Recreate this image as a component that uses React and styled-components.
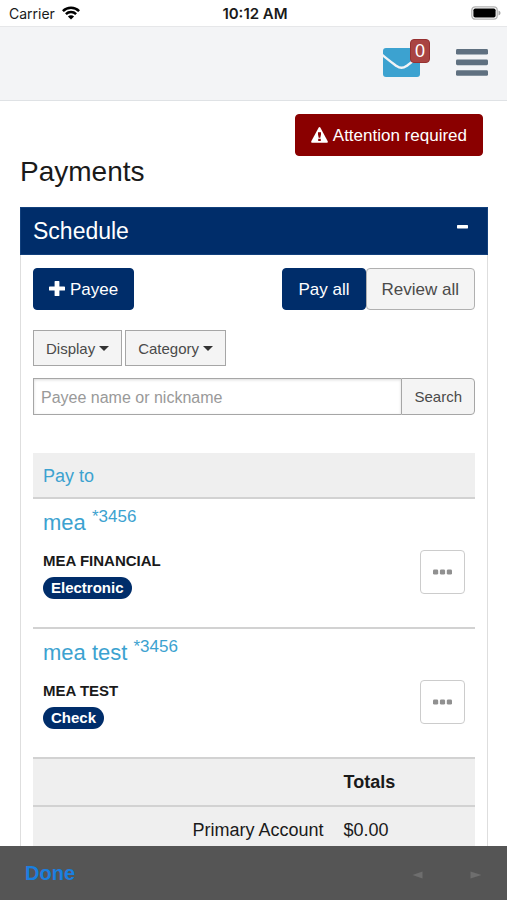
import { useState } from 'react';
import styled, { createGlobalStyle, css } from 'styled-components';

const NAVY = '#002d6a';
const SKY = '#3ca2d0';

const PAYEES = [
  { id: 1, nickname: 'mea', account: '*3456', name: 'MEA FINANCIAL', type: 'Electronic' },
  { id: 2, nickname: 'mea test', account: '*3456', name: 'MEA TEST', type: 'Check' },
];

const WifiIcon = () => (
  <svg width="18" height="14" viewBox="0 0 18 14" aria-hidden="true">
    <g fill="none" stroke="#000" strokeWidth="2.5">
      <path d="M0.9 5.1C5.4 0.6 12.6 0.6 17.1 5.1" />
      <path d="M3.9 8.1C6.7 5.3 11.3 5.3 14.1 8.1" />
    </g>
    <path d="M9 13.6L5.9 10.4C7.6 8.7 10.4 8.7 12.1 10.4Z" />
  </svg>
);

const BatteryIcon = () => (
  <svg width="30" height="14" viewBox="0 0 30 14" aria-hidden="true">
    <rect x="0.8" y="0.8" width="25.4" height="12.4" rx="3.4" fill="#fff" stroke="#b3b3b3" strokeWidth="1.3" />
    <rect x="2.4" y="2.4" width="22.2" height="9.2" rx="1.8" />
    <path d="M27.5 4.6C30.2 5.4 30.2 8.6 27.5 9.4Z" fill="#a6a6a6" />
  </svg>
);

const EnvelopeIcon = () => (
  <svg width="37" height="29" viewBox="0 0 37 29" aria-hidden="true">
    <rect width="37" height="29" rx="3" fill={SKY} />
    <path
      d="M-1 6.6C4 11 9 14.6 13.6 18C17.2 20.6 19.8 20.6 23.4 18C28 14.6 33 11 38 6.6"
      fill="none"
      stroke="#f3f4f6"
      strokeWidth="2.4"
    />
  </svg>
);

const MenuIcon = () => (
  <svg width="32" height="27" viewBox="0 0 32 27" fill="#5f7080" aria-hidden="true">
    <rect width="32" height="5.6" rx="1.4" />
    <rect y="10.6" width="32" height="5.6" rx="1.4" />
    <rect y="21.2" width="32" height="5.6" rx="1.4" />
  </svg>
);

const WarningIcon = () => (
  <svg width="17" height="16" viewBox="0 0 17 16" aria-hidden="true">
    <path
      d="M7.7 0.5Q8.5 -0.4 9.3 0.5L16.7 14.2Q17.2 15.6 16 15.8H1Q-0.2 15.6 0.3 14.2Z"
      fill="#fff"
    />
    <path d="M7 5.2H10V7.6L9.3 10.8H7.7L7 7.6ZM7.2 11.8H9.8V14H7.2Z" fill="#8a0000" />
  </svg>
);

const PlusIcon = () => (
  <svg width="16" height="16" viewBox="0 0 16 16" fill="#fff" aria-hidden="true">
    <path d="M6.2 0H9.8Q10.4 0 10.4 0.6V5.4H15.2Q16 5.4 16 6V9Q16 9.6 15.2 9.6H10.4V14.4Q10.4 15 9.8 15H6.2Q5.6 15 5.6 14.4V9.6H0.8Q0 9.6 0 9V6Q0 5.4 0.8 5.4H5.6V0.6Q5.6 0 6.2 0Z" />
  </svg>
);

const DotsIcon = () => (
  <svg width="19" height="6" viewBox="0 0 19 6" fill="#909090" aria-hidden="true">
    <rect x="0" y="0.4" width="5.2" height="5.2" rx="1.4" />
    <rect x="6.9" y="0.4" width="5.2" height="5.2" rx="1.4" />
    <rect x="13.8" y="0.4" width="5.2" height="5.2" rx="1.4" />
  </svg>
);

const Arrow = ({ back }) => (
  <svg width="12" height="8" viewBox="0 0 12 8" fill="#6e6e6e" aria-hidden="true">
    <path d={back ? 'M0.5 4L10.5 0.4V7.6Z' : 'M11.5 4L0.5 0.4V7.6Z'} />
  </svg>
);

const App = () => {
  const [open, setOpen] = useState(true);
  const [keyword, setKeyword] = useState('');

  return (
    <SPage>
      <GlobalStyle />
      <SStatusBar>
        <SCarrier>
          Carrier <WifiIcon />
        </SCarrier>
        <STime>10:12 AM</STime>
        <SBattery>
          <BatteryIcon />
        </SBattery>
      </SStatusBar>
      <SHeader>
        <SIconButton type="button" aria-label="Messages">
          <EnvelopeIcon />
          <SCount>0</SCount>
        </SIconButton>
        <SIconButton type="button" aria-label="Menu">
          <MenuIcon />
        </SIconButton>
      </SHeader>
      <SMain>
        <SAlert>
          <SButton type="button" $variant="danger">
            <WarningIcon />
            Attention required
          </SButton>
        </SAlert>
        <STitle>Payments</STitle>
        <SPanelHeader>
          <h2>Schedule</h2>
          <SCollapse
            type="button"
            aria-label="Toggle schedule"
            aria-expanded={open}
            onClick={() => setOpen(!open)}
          >
            <svg width="12" height="4" viewBox="0 0 12 4" aria-hidden="true">
              <rect width="11" height="3.4" rx="0.6" fill="#fff" />
            </svg>
          </SCollapse>
        </SPanelHeader>
        {open && (
          <SPanelBody>
            <SActions>
              <SButton type="button" $variant="primary">
                <PlusIcon />
                Payee
              </SButton>
              <div className="group">
                <SButton type="button" $variant="primary">
                  Pay all
                </SButton>
                <SButton type="button">Review all</SButton>
              </div>
            </SActions>
            <SFilters>
              <SDropdown type="button" aria-haspopup="menu">
                Display
              </SDropdown>
              <SDropdown type="button" aria-haspopup="menu">
                Category
              </SDropdown>
            </SFilters>
            <SSearch onSubmit={(e) => e.preventDefault()}>
              <input
                type="text"
                aria-label="Payee name or nickname"
                placeholder="Payee name or nickname"
                value={keyword}
                onChange={(e) => setKeyword(e.target.value)}
              />
              <button type="submit">Search</button>
            </SSearch>
            <STable>
              <colgroup>
                <col className="wide" />
                <col />
              </colgroup>
              <thead>
                <tr>
                  <th colSpan="2">
                    <SLink href="#pay-to">Pay to</SLink>
                  </th>
                </tr>
              </thead>
              <tbody>
                {PAYEES.map((payee) => (
                  <tr key={payee.id}>
                    <td>
                      <SPayeeLink href={`#payee-${payee.id}`}>
                        {payee.nickname} <sup>{payee.account}</sup>
                      </SPayeeLink>
                      <SPayeeName>{payee.name}</SPayeeName>
                      <SBadge>{payee.type}</SBadge>
                    </td>
                    <td className="more">
                      <SMore type="button" aria-label={`Options for ${payee.nickname}`}>
                        <DotsIcon />
                      </SMore>
                    </td>
                  </tr>
                ))}
              </tbody>
              <tfoot>
                <tr>
                  <td />
                  <th scope="col">Totals</th>
                </tr>
                <tr>
                  <td className="label">Primary Account</td>
                  <td>$0.00</td>
                </tr>
              </tfoot>
            </STable>
          </SPanelBody>
        )}
      </SMain>
      <SToolbar>
        <SDone type="button">Done</SDone>
        <SNav>
          <button type="button" aria-label="Back" disabled>
            <Arrow back />
          </button>
          <button type="button" aria-label="Forward" disabled>
            <Arrow />
          </button>
        </SNav>
      </SToolbar>
    </SPage>
  );
};

const GlobalStyle = createGlobalStyle`
  *, *::before, *::after {
    box-sizing: border-box;
  }
  body {
    margin: 0;
    background: #fff;
    color: #1a1a1a;
    font-family: 'Liberation Sans', Arial, sans-serif;
  }
  button, input {
    margin: 0;
    font-family: inherit;
  }
  button {
    cursor: pointer;
  }
  svg {
    display: block;
    flex-shrink: 0;
  }
`;

const SPage = styled.div`
  display: flex;
  flex-direction: column;
  height: 100vh;
`;

const SStatusBar = styled.div`
  display: grid;
  grid-template-columns: 1fr auto 1fr;
  align-items: center;
  height: 26px;
  padding: 0 6px 0 9px;
  font-family: Inter, sans-serif;
  font-size: 14px;
  flex-shrink: 0;
`;

const SCarrier = styled.div`
  display: flex;
  align-items: center;
  gap: 7px;
`;

const STime = styled.div`
  font-size: 15px;
  font-weight: 600;
`;

const SBattery = styled.div`
  justify-self: end;
`;

const SHeader = styled.header`
  display: flex;
  align-items: center;
  justify-content: flex-end;
  gap: 36px;
  height: 75px;
  padding: 0 19px 2px;
  background: #f3f4f6;
  border-top: 1px solid #e6e7e9;
  border-bottom: 1px solid #dfe2e5;
  flex-shrink: 0;
`;

const SIconButton = styled.button`
  position: relative;
  padding: 0;
  border: 0;
  background: none;
`;

const SCount = styled.span`
  position: absolute;
  top: -9px;
  right: -10px;
  width: 20px;
  border: 1px solid #963030;
  border-radius: 4px;
  background: #a94442;
  color: #fff;
  font-size: 18px;
  line-height: 22px;
  text-align: center;
`;

const SMain = styled.main`
  flex: 1;
  min-height: 0;
  padding: 13px 19px 0 20px;
  overflow-y: auto;
  scrollbar-width: none;
`;

const SAlert = styled.div`
  display: flex;
  justify-content: flex-end;
  padding-right: 5px;
`;

const STitle = styled.h1`
  margin: 0 0 20px;
  font-size: 28px;
  font-weight: 400;
  line-height: 31px;
`;

const variants = {
  primary: css`
    border-color: ${NAVY};
    background: ${NAVY};
    color: #fff;
  `,
  danger: css`
    border-color: #8a0000;
    background: #8a0000;
    color: #fff;
  `,
};

const SButton = styled.button`
  display: flex;
  align-items: center;
  gap: 5px;
  height: 42px;
  padding: 2px 15px 0;
  border: 1px solid #b0b0b0;
  border-radius: 4px;
  background: #f4f4f4;
  color: #4a4a4a;
  font-size: 17px;
  ${({ $variant }) => variants[$variant]}
  svg {
    margin-bottom: 2px;
  }
`;

const SPanelHeader = styled.div`
  display: flex;
  align-items: center;
  justify-content: space-between;
  height: 48px;
  padding: 0 12px;
  border: 1px solid #12407c;
  background: ${NAVY};
  color: #fff;
  h2 {
    margin: 0;
    font-size: 23px;
    font-weight: 400;
  }
`;

const SCollapse = styled.button`
  align-self: stretch;
  padding: 0 6px 8px;
  border: 0;
  background: none;
`;

const SPanelBody = styled.div`
  padding: 13px 12px 20px;
  border: 1px solid #dedede;
  border-top: 0;
`;

const SActions = styled.div`
  display: flex;
  justify-content: space-between;
  margin-bottom: 20px;
  .group {
    display: flex;
  }
`;

const SFilters = styled.div`
  display: flex;
  gap: 3px;
  margin-bottom: 12px;
`;

const SDropdown = styled.button`
  display: flex;
  align-items: center;
  gap: 4px;
  height: 36px;
  padding: 0 12px;
  border: 1px solid #a6a6a6;
  background: #f4f4f4;
  color: #4a4a4a;
  font-size: 15px;
  &::after {
    content: '';
    border-top: 5px solid #333;
    border-right: 5px solid transparent;
    border-left: 5px solid transparent;
  }
`;

const SSearch = styled.form`
  display: flex;
  height: 37px;
  margin-bottom: 38px;
  input {
    flex: 1;
    min-width: 0;
    padding: 2px 7px 0;
    border: 1px solid #a6a6a6;
    border-right: 0;
    border-radius: 0;
    box-shadow: inset 0 1px 3px rgba(0, 0, 0, 0.15);
    color: #4a4a4a;
    font-size: 16px;
  }
  input::placeholder {
    color: #999;
  }
  button {
    padding: 0 12px;
    border: 1px solid #a6a6a6;
    border-radius: 0 4px 4px 0;
    background: #f4f4f4;
    color: #4a4a4a;
    font-size: 15px;
  }
`;

const STable = styled.table`
  width: 100%;
  border-spacing: 0;
  table-layout: fixed;
  font-size: 18px;
  line-height: 22px;
  .wide {
    width: 68%;
  }
  th,
  td {
    padding: 12px 10px;
    border-bottom: 2px solid #d2d2d2;
    text-align: left;
  }
  thead th,
  tfoot {
    background: #efefef;
  }
  thead th {
    padding: 12px 10px 10px;
    font-weight: 400;
  }
  tbody td {
    height: 130px;
    padding: 4px 10px 0;
    vertical-align: top;
  }
  tbody td.more {
    padding: 17px 10px 0;
    vertical-align: middle;
  }
  .label {
    text-align: right;
  }
`;

const SLink = styled.a`
  color: ${SKY};
  text-decoration: none;
`;

const SPayeeLink = styled(SLink)`
  display: block;
  font-size: 22px;
  line-height: 40px;
  sup {
    font-size: 17px;
    line-height: 0;
  }
`;

const SPayeeName = styled.div`
  margin: 7px 0 4px;
  font-size: 15px;
  font-weight: 700;
`;

const SBadge = styled.span`
  display: inline-block;
  padding: 0 8px;
  border-radius: 11px;
  background: ${NAVY};
  color: #fff;
  font-size: 15px;
  font-weight: 700;
`;

const SMore = styled.button`
  display: flex;
  align-items: center;
  justify-content: center;
  width: 45px;
  height: 44px;
  margin-left: auto;
  padding: 0;
  border: 1px solid #ccc;
  border-radius: 4px;
  background: #fff;
`;

const SToolbar = styled.footer`
  display: flex;
  align-items: center;
  justify-content: space-between;
  height: 54px;
  padding: 0 25px;
  background: #555;
  flex-shrink: 0;
`;

const SDone = styled.button`
  padding: 0;
  border: 0;
  background: none;
  color: #1a7fe0;
  font-size: 20px;
  font-weight: 700;
`;

const SNav = styled.div`
  display: flex;
  gap: 46px;
  button {
    padding: 4px 0 0;
    border: 0;
    background: none;
  }
`;

export default App;
